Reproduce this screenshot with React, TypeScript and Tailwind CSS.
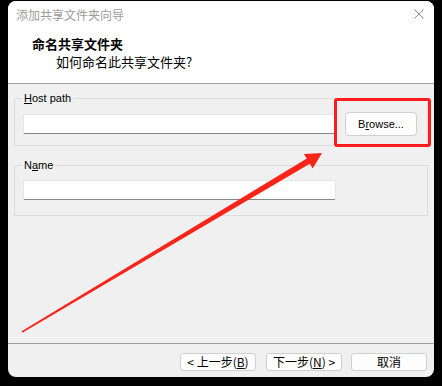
const cjk = { fontFamily: '"Noto Sans CJK SC", "Noto Sans", sans-serif' };
const latin = { fontFamily: '"Liberation Sans", Arial, sans-serif' };

const WizardButton = ({ children }: { children: React.ReactNode }) => (
  <button
    className="w-[76px] h-[18px] bg-[#fdfdfd] border border-[#d0d0d0] rounded-[3px] text-[12px] leading-[16px] text-black flex items-center justify-center"
    style={cjk}
  >
    {children}
  </button>
);

export default function App() {
  return (
    <div className="relative w-[442px] h-[386px] bg-black overflow-hidden pt-px pl-2">
      <div className="w-[426px] h-[376px] bg-[#f0f0f0] rounded-lg overflow-hidden flex flex-col">
        {/* header */}
        <div className="h-[83px] bg-white border-b border-[#a0a0a0] flex flex-col">
          <div className="h-[28px] flex items-center justify-between pl-2 pr-[10px]">
            <span className="text-[12px] leading-[16px] text-[#9c9c9c]" style={cjk}>
              添加共享文件夹向导
            </span>
            <svg width="10" height="10" viewBox="0 0 10 10" className="mt-[-2px]">
              <path d="M0.5 0.5 L9.5 9.5 M9.5 0.5 L0.5 9.5" stroke="#8c8c8c" strokeWidth="1" fill="none" />
            </svg>
          </div>
          <div className="pl-6 mt-[6px] text-[13px] leading-[18px] font-bold text-black" style={cjk}>
            命名共享文件夹
          </div>
          <div className="pl-12 text-[13px] leading-[18px] text-black" style={cjk}>
            如何命名此共享文件夹?
          </div>
        </div>

        {/* body */}
        <div className="flex-1 px-[6px] pt-[7px]">
          <fieldset className="border border-[#dcdcdc] pb-[9px]">
            <legend className="ml-[7px] px-[2px] text-[11px] leading-[14px] text-black" style={latin}>
              <span className="underline">H</span>ost path
            </legend>
            <div className="flex items-center pt-[7px] pl-[8px]">
              <div className="w-[313px] h-[20px] bg-white border border-[#e6e6e6] border-b-[#868686] rounded-[2px]" />
              <button
                className="ml-[9px] w-[72px] h-[24px] bg-[#fdfdfd] border border-[#d0d0d0] rounded-[4px] text-[11px] text-black"
                style={latin}
              >
                B<span className="underline">r</span>owse...
              </button>
            </div>
          </fieldset>

          <fieldset className="mt-[12px] border border-[#dcdcdc] pb-[15px]">
            <legend className="ml-[7px] px-[2px] text-[11px] leading-[14px] text-black" style={latin}>
              N<span className="underline">a</span>me
            </legend>
            <div className="pt-[8px] pl-[8px]">
              <div className="w-[313px] h-[20px] bg-white border border-[#e6e6e6] border-b-[#868686] rounded-[2px]" />
            </div>
          </fieldset>
        </div>

        {/* footer */}
        <div className="h-[34px] border-t border-[#a0a0a0] flex justify-end items-start pt-[9px] pr-[7px]">
          <WizardButton>
            &lt; 上一步(<span className="underline">B</span>)
          </WizardButton>
          <div className="w-[10px]" />
          <WizardButton>
            下一步(<span className="underline">N</span>) &gt;
          </WizardButton>
          <div className="w-[9px]" />
          <WizardButton>取消</WizardButton>
        </div>
      </div>

      {/* annotation overlay */}
      <div className="absolute left-[334px] top-[98px] w-[97px] h-[49px] border-[3px] border-[#ff1c1c] rounded-[3px]" />
      <svg className="absolute inset-0" width="442" height="386" viewBox="0 0 442 386">
        <polygon
          points="21.6,331.3 306.8,158.6 303.9,153.9 322,153 312.7,168.5 309.8,163.8 22.4,332.7"
          fill="#fb2418"
        />
      </svg>
    </div>
  );
}
